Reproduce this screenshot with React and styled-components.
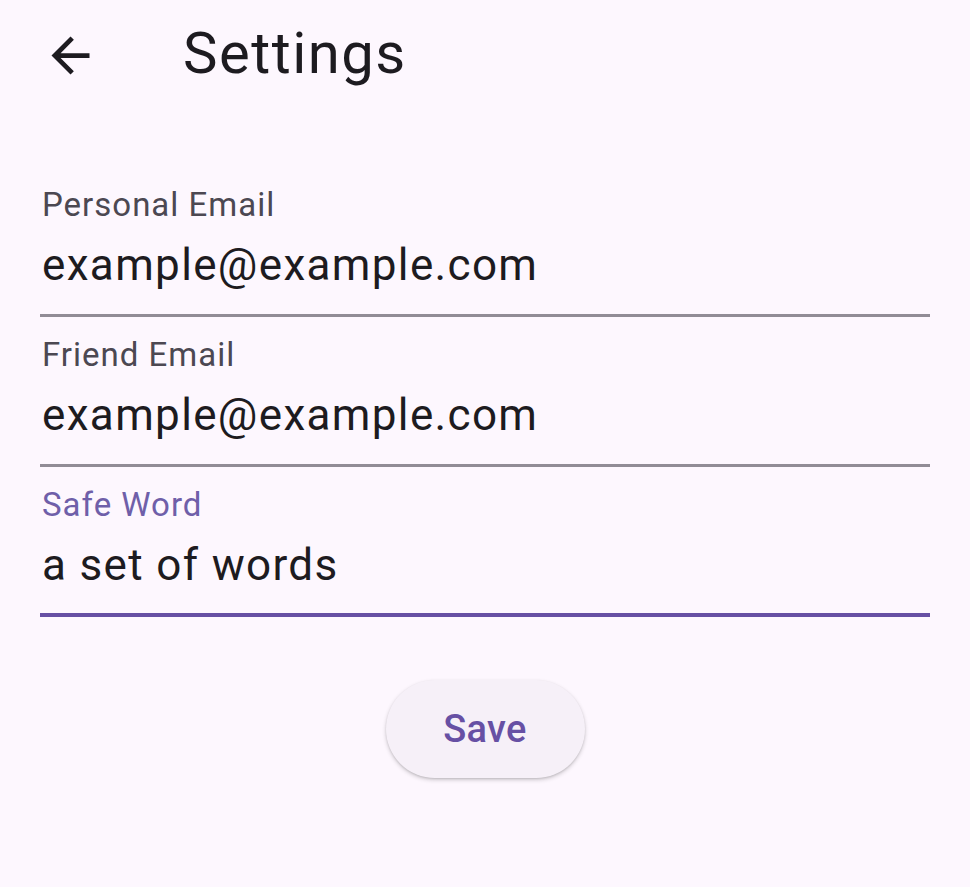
import styled, { createGlobalStyle } from 'styled-components'

const GlobalStyle = createGlobalStyle`
  html, body {
    margin: 0;
    padding: 0;
    background: #fdf7fe;
  }
  body {
    font-family: Roboto, "Liberation Sans", sans-serif;
    color: #1d1b20;
  }
`

const Page = styled.div`
  width: 970px;
  height: 887px;
  background: #fdf7fe;
  overflow: hidden;
`

const Toolbar = styled.header`
  display: flex;
  align-items: center;
  height: 110px;
  padding-left: 42px;
`

const BackButton = styled.button`
  display: flex;
  align-items: center;
  justify-content: center;
  width: 57px;
  height: 57px;
  padding: 0;
  border: none;
  background: none;
  color: #1d1b20;
  margin-right: 84px;

  svg {
    width: 57px;
    height: 57px;
  }
`

const Title = styled.h1`
  margin: 0;
  padding-bottom: 4px;
  font-size: 58px;
  line-height: 58px;
  font-weight: 400;
  letter-spacing: 1.5px;
`

const Form = styled.div`
  display: flex;
  flex-direction: column;
  padding: 57px 40px 0 40px;
  width: 890px;
`

const Field = styled.label`
  display: flex;
  flex-direction: column;
  height: 150px;
  box-sizing: border-box;
  padding: 18px 0 0 2px;
  border-bottom: ${p => (p.$focused ? '4px solid #6750a4' : '3px solid #918c96')};
`

const Label = styled.span`
  font-size: 33px;
  line-height: 40px;
  letter-spacing: 1px;
  color: ${p => (p.$focused ? '#6f5fa9' : '#4c4852')};
`

const Value = styled.span`
  font-size: 44px;
  line-height: 52px;
  letter-spacing: 1.35px;
  margin-top: 14px;
  color: #1d1b20;
`

const Actions = styled.div`
  display: flex;
  justify-content: center;
  padding-top: 63px;
`

const SaveButton = styled.button`
  width: 199px;
  height: 98px;
  border: none;
  border-radius: 49px;
  background: #f6f0f8;
  box-shadow: 0 2px 4px rgba(0, 0, 0, 0.18), 0 1px 2px rgba(0, 0, 0, 0.1);
  font-family: Roboto, "Liberation Sans", sans-serif;
  font-size: 38px;
  font-weight: 500;
  letter-spacing: 0.3px;
  color: #6750a4;
`

const fields = [
  { label: 'Personal Email', value: 'example@example.com' },
  { label: 'Friend Email', value: 'example@example.com' },
  { label: 'Safe Word', value: 'a set of words', focused: true },
]

const App = () => {
  return (
    <Page>
      <GlobalStyle />
      <Toolbar>
        <BackButton aria-label="Back">
          <svg viewBox="0 0 24 24" fill="currentColor">
            <path d="M20 11H7.83l5.59-5.59L12 4l-8 8 8 8 1.41-1.41L7.83 13H20v-2z" />
          </svg>
        </BackButton>
        <Title>Settings</Title>
      </Toolbar>

      <Form>
        {fields.map(f => (
          <Field key={f.label} $focused={f.focused}>
            <Label $focused={f.focused}>{f.label}</Label>
            <Value>{f.value}</Value>
          </Field>
        ))}
      </Form>

      <Actions>
        <SaveButton>Save</SaveButton>
      </Actions>
    </Page>
  )
}

export default App
